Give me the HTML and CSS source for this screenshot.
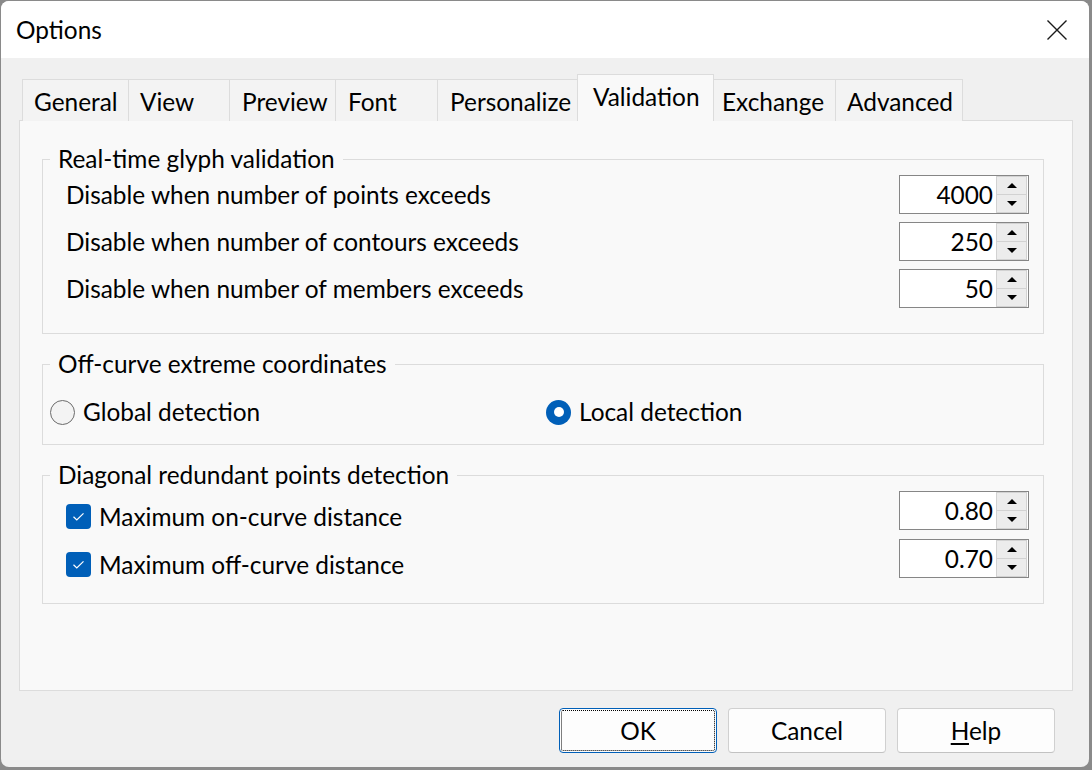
FILE: index.html
```html
<!DOCTYPE html>
<html lang="en">

<head>
    <meta charset="UTF-8">
    <meta name="viewport" content="width=device-width, initial-scale=1.0">
    <title>Options</title>

    <link rel="stylesheet" href="styles.css">
</head>

<body>
    <div class="window">
        <div class="titlebar">
            <span class="title">Options</span>
            <svg class="close" viewBox="0 0 22 22" width="22" height="22">
                <path d="M1.5 1.5 L20.5 20.5 M20.5 1.5 L1.5 20.5" stroke="#1a1a1a" stroke-width="1.4" fill="none" />
            </svg>
        </div>

        <div class="dialog">
            <div class="tabs">
                <div class="tab tab-general">General</div>
                <div class="tab tab-view">View</div>
                <div class="tab tab-preview">Preview</div>
                <div class="tab tab-font">Font</div>
                <div class="tab tab-personalize">Personalize</div>
                <div class="tab tab-validation active">Validation</div>
                <div class="tab tab-exchange">Exchange</div>
                <div class="tab tab-advanced">Advanced</div>
            </div>

            <div class="panel">
                <fieldset class="group">
                    <legend>Real-time glyph validation</legend>
                    <div class="row">
                        <span>Disable when number of points exceeds</span>
                        <div class="spin"><span class="spinValue">4000</span><div class="spinButtons"><span class="spinUp"></span><span class="spinDown"></span></div></div>
                    </div>
                    <div class="row">
                        <span>Disable when number of contours exceeds</span>
                        <div class="spin"><span class="spinValue">250</span><div class="spinButtons"><span class="spinUp"></span><span class="spinDown"></span></div></div>
                    </div>
                    <div class="row">
                        <span>Disable when number of members exceeds</span>
                        <div class="spin"><span class="spinValue">50</span><div class="spinButtons"><span class="spinUp"></span><span class="spinDown"></span></div></div>
                    </div>
                </fieldset>

                <fieldset class="group groupChoices">
                    <legend>Off-curve extreme coordinates</legend>
                    <div class="choices">
                        <label class="choice"><span class="radio"></span>Global detection</label>
                        <label class="choice"><span class="radio checked"></span>Local detection</label>
                    </div>
                </fieldset>

                <fieldset class="group groupLast">
                    <legend>Diagonal redundant points detection</legend>
                    <div class="row">
                        <label class="check">
                            <svg class="checkbox" viewBox="0 0 25 25" width="25" height="25">
                                <rect x="0" y="0" width="25" height="25" rx="4" fill="#005fb8" />
                                <path d="M7.5 12.8 L10.8 16 L17.5 9.3" stroke="#fff" stroke-width="1.2" fill="none" />
                            </svg>
                            Maximum on-curve distance
                        </label>
                        <div class="spin"><span class="spinValue">0.80</span><div class="spinButtons"><span class="spinUp"></span><span class="spinDown"></span></div></div>
                    </div>
                    <div class="row">
                        <label class="check">
                            <svg class="checkbox" viewBox="0 0 25 25" width="25" height="25">
                                <rect x="0" y="0" width="25" height="25" rx="4" fill="#005fb8" />
                                <path d="M7.5 12.8 L10.8 16 L17.5 9.3" stroke="#fff" stroke-width="1.2" fill="none" />
                            </svg>
                            Maximum off-curve distance
                        </label>
                        <div class="spin"><span class="spinValue">0.70</span><div class="spinButtons"><span class="spinUp"></span><span class="spinDown"></span></div></div>
                    </div>
                </fieldset>
            </div>

            <div class="footer">
                <button class="btn btnDefault">OK</button>
                <button class="btn">Cancel</button>
                <button class="btn"><u>H</u>elp</button>
            </div>
        </div>
    </div>
</body>

</html>
```

FILE: styles.css
```css
*{box-sizing: border-box;}
body{margin: 0;background: #8a8a8a;font-family: Lato, "Liberation Sans", sans-serif;font-size: 24.4px;color: #000;}

.window{width: 1088px;height: 766px;margin: 1px 0 0 1px;background: #f0f0f0;border-radius: 8px;overflow: hidden;}
.titlebar{height: 57px;background: #fff;display: flex;align-items: center;justify-content: space-between;padding: 0 21px 0 15px;}
.title{line-height: 32px;}
.close{display: block;}

.dialog{padding: 16px 0 0 18px;}

/* tab strip */
.tabs{display: flex;align-items: flex-end;height: 47px;margin-left: 3px;margin-bottom: -1px;position: relative;z-index: 1;}
.tab{height: 42px;border: 1px solid #dcdcdc;border-bottom: none;background: #f3f3f3;line-height: 32px;padding: 6px 0 0 11px;margin-left: -1px;white-space: nowrap;}
.tab:first-child{margin-left: 0;}
.tab.active{height: 47px;background: #f9f9f9;padding-left: 15px;}
.tab-general{width: 107px;}
.tab-view{width: 102px;}
.tab-preview{width: 107px;padding-left: 12px;}
.tab-font{width: 103px;padding-left: 12px;}
.tab-personalize{width: 141px;padding-left: 12px;}
.tab-validation{width: 137px;}
.tab-exchange{width: 123px;padding-left: 8px;}
.tab-advanced{width: 128px;}

.panel{width: 1054px;height: 571px;border: 1px solid #dcdcdc;background: #f9f9f9;padding: 22px 0 0 22px;}

/* group boxes */
.group{width: 1002px;margin: 0 0 14px 0;border: 1px solid #dcdcdc;padding: 0 14px 25px 7px;min-width: 0;}
.group legend{margin-left: 0;padding: 0 8px;line-height: 32px;}
.groupChoices{padding-bottom: 12px;}
.groupLast{padding-bottom: 25px;}
.groupLast .row + .row{margin-top: 9px;}

.row{display: flex;align-items: center;justify-content: space-between;height: 39px;padding-left: 16px;}
.row + .row{margin-top: 8px;}

.spin{width: 130px;height: 39px;border: 1px solid #868686;background: #fff;display: flex;}
.spinValue{flex: 1;text-align: right;padding-right: 3px;line-height: 37px;}
.spinButtons{width: 31px;display: flex;flex-direction: column;margin-right: 1px;}
.spinUp,.spinDown{flex: 1;background: #ececec;border: 1px solid #d2d2d2;display: flex;align-items: center;justify-content: center;}
.spinDown{border-top: none;}
.spinUp::after{content: "";border-left: 5px solid transparent;border-right: 5px solid transparent;border-bottom: 5px solid #000;}
.spinDown::after{content: "";border-left: 5px solid transparent;border-right: 5px solid transparent;border-top: 5px solid #000;}

.choices{display: grid;grid-template-columns: 496px 1fr;height: 40px;margin-top: 12px;align-items: center;}
.choice{display: flex;align-items: center;gap: 8px;line-height: 32px;}
.radio{width: 25px;height: 25px;border-radius: 50%;border: 1.5px solid #6b6b6b;background: #f3f3f3;display: flex;align-items: center;justify-content: center;}
.radio.checked{border: none;background: #005fb8;}
.radio.checked::after{content: "";width: 10px;height: 10px;border-radius: 50%;background: #fff;}

.check{display: flex;align-items: center;gap: 8px;line-height: 32px;margin-top: 12px;}
.checkbox{display: block;}

/* bottom buttons */
.footer{display: flex;justify-content: flex-end;gap: 11px;padding: 17px 34px 0 0;}
.btn{width: 158px;height: 45px;font-family: inherit;font-size: 24.4px;color: #000;background: #fdfdfd;border: 1px solid #d0d0d0;border-bottom-color: #c2c2c2;border-radius: 4px;padding: 0;}
.btn u{text-underline-offset: 3px;}
.btnDefault{border-color: #005fb8;outline: 1px dotted #000;outline-offset: -3px;}
```
